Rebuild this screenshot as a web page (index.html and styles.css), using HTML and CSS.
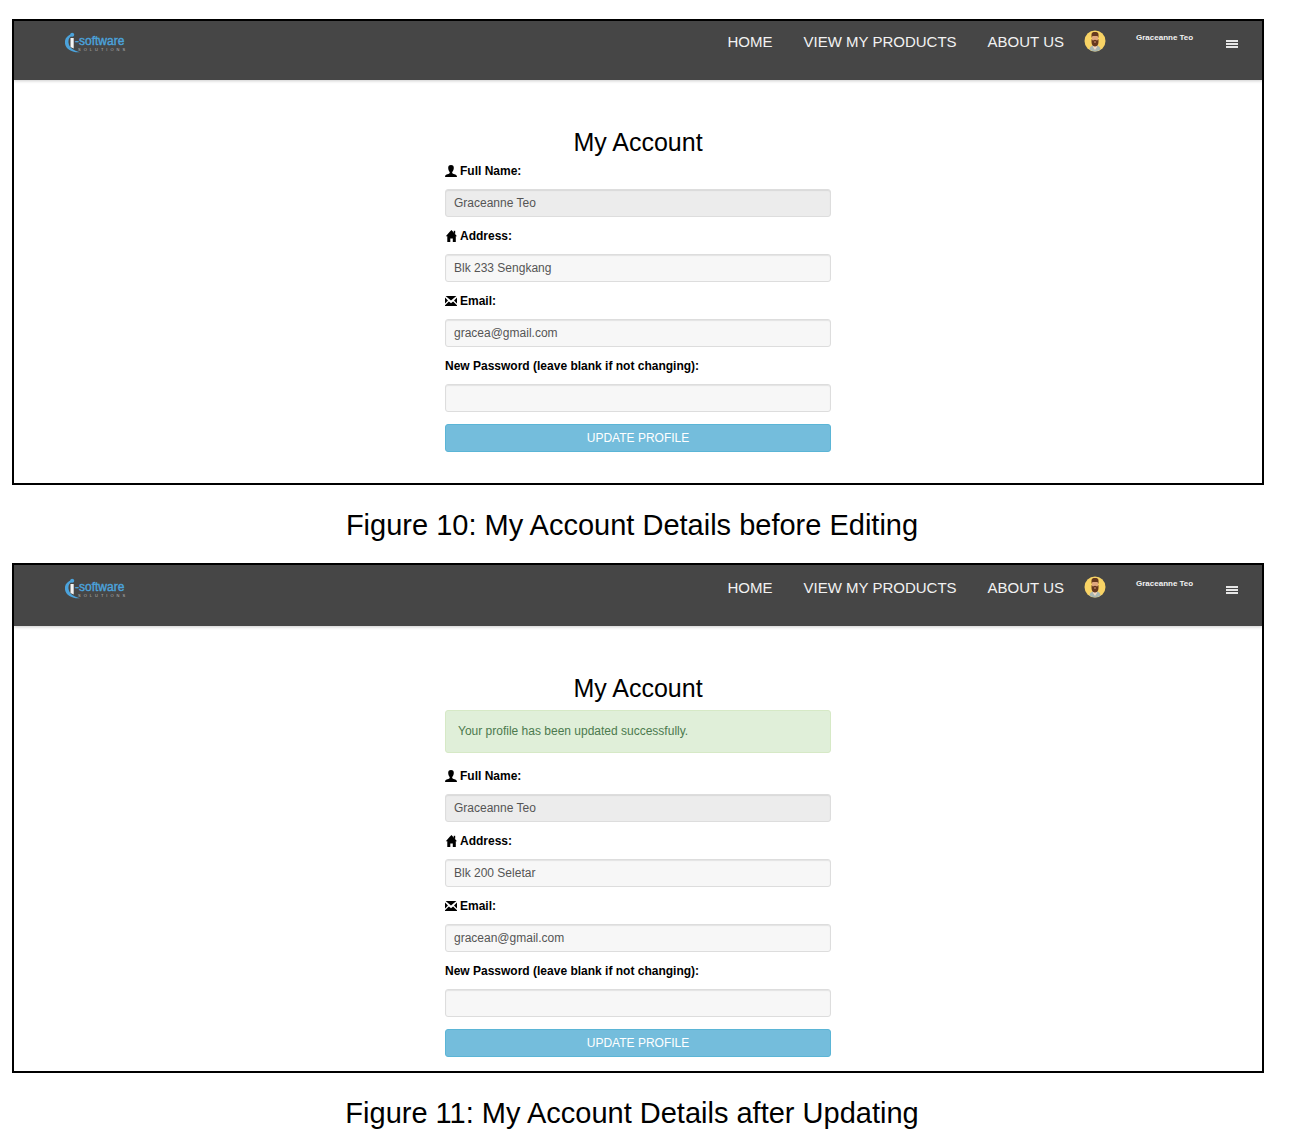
FILE: index.html
```html
<!DOCTYPE html>
<html lang="en">
<head>
<meta charset="utf-8">
<meta name="viewport" content="width=device-width, initial-scale=1">
<title>My Account</title>
<link rel="stylesheet" href="styles.css">
</head>
<body>
<svg width="0" height="0" class="sprite" aria-hidden="true">
  <symbol id="logo-mark" viewBox="0 0 66 22">
    <path d="M7 2 C-1.500 4-2.500 14 4.500 18 C8 20 11.500 20.600 15 20.200 C8.500 18.800 3.900 15.500 3.500 10.500 C3.200 7 4.500 5 7 4Z" fill="#4ba3dc"/>
    <circle cx="7.200" cy="2.700" r="2" fill="#4ba3dc"/>
    <path d="M5.500 6h3.200v10.500l-3.200-1.500z" fill="#f4f4f4"/>
  </symbol>
  <symbol id="avatar" viewBox="0 0 22 22">
    <circle cx="11" cy="11" r="10.500" fill="#f8d365"/>
    <path d="M5.500 19.800c0-3 2-4.600 5.500-4.600s5.500 1.600 5.500 4.600a10.500 10.500 0 0 1-11 0z" fill="#a9b7b2"/>
    <path d="M9 13h4v4l-2 3-2-3z" fill="#f3d9c2"/>
    <path d="M8 5h6v6c0 3-1.300 4-3 4s-3-1-3-4z" fill="#e0a77e"/>
    <path d="M7.500 8V4.500C7.500 2.500 9 2 11 2s3.500.5 3.500 2.500V8l-1-2h-5z" fill="#65391f"/>
    <path d="M7.500 9l1.300 1.500L11 9.800l2.200.7L14.500 9v3c0 3-1.800 4.500-3.500 4.500S7.500 15 7.500 12z" fill="#65391f"/>
    <path d="M10 12h2" stroke="#d99577"/>
  </symbol>
  <symbol id="user" viewBox="0 0 12 12">
    <path d="M6 0C4 0 3.100 1.300 3.200 3c.1 1.800.6 3 1.500 3.900v1C4.600 9 .3 9 .1 11v1h11.800v-1C11.700 9 7.400 9 7.200 7.900v-1C8.100 6 8.700 4.800 8.800 3 8.900 1.300 8 0 6 0z"/>
  </symbol>
  <symbol id="home" viewBox="0 0 12 12">
    <path d="M6.500 0 12 6.200h-1.200V12H7.800V8.500H5.300V12H2.300V6.200H.8L2.800 4.100 4.500 2z"/>
    <path d="M8.700.8h1.500v3H8.700z"/>
  </symbol>
  <symbol id="mail" viewBox="0 0 12 12">
    <path d="M.6 1h10.800L6 5.600zM0 2.600 3 5.600 0 8.500zM12 2.600V8.500L9 5.600zM0 11v-.7l3.900-3.800L6 8.300l2.100-1.800 3.900 3.800v.7z"/>
  </symbol>
</svg>

<figure class="shot">
  <div class="frame">
    <header class="navbar">
      <a href="#" class="brand">
        <svg viewBox="0 0 66 22">
          <use href="#logo-mark" width="66" height="22"/>
          <text x="10" y="13" class="logo-name">-software</text>
          <text x="13" y="19" class="logo-tag">SOLUTIONS</text>
        </svg>
      </a>
      <nav class="links">
        <a href="#">HOME</a>
        <a href="#">VIEW MY PRODUCTS</a>
        <a href="#">ABOUT US</a>
      </nav>
      <svg class="avatar" aria-hidden="true"><use href="#avatar"/></svg>
      <span class="user-name">Graceanne Teo</span>
      <button type="button" class="menu" aria-label="Menu"><span></span><span></span><span></span></button>
    </header>
    <main class="account">
      <h1>My Account</h1>
      <form>
        <div class="field">
          <label for="name-a"><svg><use href="#user"/></svg>Full Name:</label>
          <input id="name-a" type="text" value="Graceanne Teo" disabled>
        </div>
        <div class="field">
          <label for="address-a"><svg><use href="#home"/></svg>Address:</label>
          <input id="address-a" type="text" value="Blk 233 Sengkang">
        </div>
        <div class="field">
          <label for="email-a"><svg><use href="#mail"/></svg>Email:</label>
          <input id="email-a" type="email" value="gracea@gmail.com">
        </div>
        <div class="field">
          <label for="password-a">New Password (leave blank if not changing):</label>
          <input id="password-a" type="password">
        </div>
        <button type="submit" class="update">UPDATE PROFILE</button>
      </form>
    </main>
  </div>
  <figcaption>Figure 10: My Account Details before Editing</figcaption>
</figure>

<figure class="shot updated">
  <div class="frame">
    <header class="navbar">
      <a href="#" class="brand">
        <svg viewBox="0 0 66 22">
          <use href="#logo-mark" width="66" height="22"/>
          <text x="10" y="13" class="logo-name">-software</text>
          <text x="13" y="19" class="logo-tag">SOLUTIONS</text>
        </svg>
      </a>
      <nav class="links">
        <a href="#">HOME</a>
        <a href="#">VIEW MY PRODUCTS</a>
        <a href="#">ABOUT US</a>
      </nav>
      <svg class="avatar" aria-hidden="true"><use href="#avatar"/></svg>
      <span class="user-name">Graceanne Teo</span>
      <button type="button" class="menu" aria-label="Menu"><span></span><span></span><span></span></button>
    </header>
    <main class="account">
      <h1>My Account</h1>
      <p class="alert" role="status">Your profile has been updated successfully.</p>
      <form>
        <div class="field">
          <label for="name-b"><svg><use href="#user"/></svg>Full Name:</label>
          <input id="name-b" type="text" value="Graceanne Teo" disabled>
        </div>
        <div class="field">
          <label for="address-b"><svg><use href="#home"/></svg>Address:</label>
          <input id="address-b" type="text" value="Blk 200 Seletar">
        </div>
        <div class="field">
          <label for="email-b"><svg><use href="#mail"/></svg>Email:</label>
          <input id="email-b" type="email" value="gracean@gmail.com">
        </div>
        <div class="field">
          <label for="password-b">New Password (leave blank if not changing):</label>
          <input id="password-b" type="password">
        </div>
        <button type="submit" class="update">UPDATE PROFILE</button>
      </form>
    </main>
  </div>
  <figcaption>Figure 11: My Account Details after Updating</figcaption>
</figure>
</body>
</html>
```

FILE: styles.css
```css
* { box-sizing: border-box; }

body {
  margin: 0;
  padding: 19px 38px 0 12px;
  background: #fff;
  color: #000;
  font-family: "Liberation Sans", Arial, sans-serif;
  font-size: 12px;
}

.sprite { display: block; }
.shot { margin: 0; }
.frame { border: 2px solid #000; }

figcaption {
  padding: 23px 12px 21px 0;
  font-size: 29px;
  line-height: 34px;
  text-align: center;
}

/* Navigation bar */
.navbar {
  display: flex;
  align-items: flex-start;
  padding: 9px 24px 26px 51px;
  background: #464646;
  box-shadow: 0 1px 3px rgba(0, 0, 0, .2);
  color: #f2f2f2;
}
.updated .navbar { padding-top: 11px; }

.brand { margin: 2px auto 0 0; }
.brand svg { display: block; width: 66px; height: 22px; }
.logo-name {
  font: 12px "Liberation Sans", Arial, sans-serif;
  fill: #4ba3dc;
  stroke: #4ba3dc;
  stroke-width: .4px;
}
.logo-tag {
  font: 4px "Liberation Sans", Arial, sans-serif;
  letter-spacing: 3px;
  fill: #bbb;
}

.links { display: flex; gap: 31px; margin-right: 20px; }
.links a {
  color: inherit;
  font-size: 15px;
  line-height: 24px;
  text-decoration: none;
}
.avatar { width: 22px; height: 22px; margin-right: 30px; }
.user-name {
  min-width: 60px;
  font-size: 8px;
  font-weight: bold;
  line-height: 16px;
}
.menu {
  display: grid;
  gap: 1px;
  width: 12px;
  margin: 10px 0 0 30px;
  padding: 0;
  border: 0;
  background: none;
}
.menu span { height: 2px; background: #e6e6e6; }

/* Account form */
.account {
  width: 386px;
  max-width: 100%;
  margin: 0 auto;
  padding: 44px 0 31px;
}
.updated .account { padding-bottom: 14px; }

h1 {
  margin: 0 0 1px;
  font-size: 25px;
  font-weight: normal;
  line-height: 36px;
  text-align: center;
}

.alert {
  margin: 4px 0 13px;
  padding: 12px;
  border: 1px solid #d6e9c6;
  border-radius: 3px;
  background: #e0efd9;
  color: #4c7a4e;
  line-height: 17px;
}

.field { margin-bottom: 9px; }
.field label {
  display: flex;
  align-items: center;
  gap: 3px;
  margin-bottom: 8px;
  font-weight: bold;
  line-height: 20px;
}
.field label svg { width: 12px; height: 12px; }
.field input {
  display: block;
  width: 100%;
  height: 28px;
  padding: 0 8px;
  border: 1px solid #ddd;
  border-radius: 3px;
  background: #f7f7f7;
  box-shadow: inset 0 1px 1px rgba(0, 0, 0, .08);
  color: #555;
  font: inherit;
}
.field input:disabled { background: #ececec; }

.update {
  display: block;
  width: 100%;
  height: 28px;
  margin-top: 12px;
  padding: 0;
  border: 1px solid #5bb5d6;
  border-radius: 3px;
  background: #74bddc;
  color: #fff;
  font: inherit;
}
```
